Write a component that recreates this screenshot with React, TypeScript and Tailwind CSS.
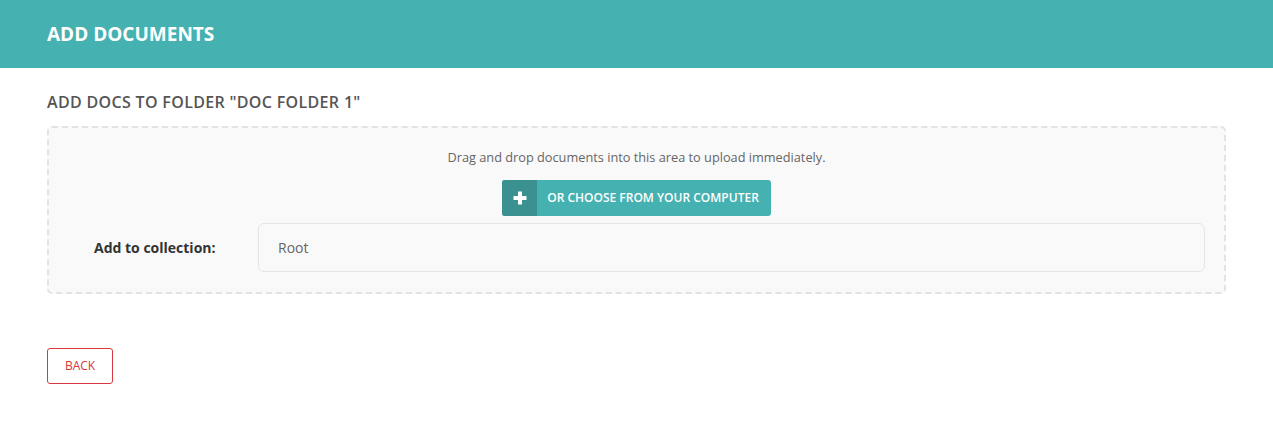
import React from "react";

export default function App() {
  return (
    <div className="min-h-[434px] w-full bg-white" style={{ fontFamily: '"Open Sans", sans-serif' }}>
      <div className="flex h-[68px] items-center bg-[#45b1b0] px-[47px]">
        <h1 className="text-[19px] font-bold text-white">ADD DOCUMENTS</h1>
      </div>
      <div className="px-[47px] pt-[22px]">
        <h2 className="text-[16px] font-semibold leading-[24px] tracking-[0.33px] text-[#555]">ADD DOCS TO FOLDER "DOC FOLDER 1"</h2>
        <div className="mt-[12px] flex h-[168px] flex-col rounded-[5px] border-2 border-dashed border-[#e3e3e3] bg-[#f9f9f9]">
          <p className="mt-[20px] text-center text-[12.75px] leading-[18px] text-[#666]">
            Drag and drop documents into this area to upload immediately.
          </p>
          <div className="mt-[14px] flex justify-center">
            <button className="flex h-[36px] items-stretch overflow-hidden rounded-[3px] bg-[#45b1b0] text-white">
              <span className="flex w-[35px] items-center justify-center bg-[#3a9190]">
                <svg width="14" height="14" viewBox="0 0 14 14">
                  <rect x="5" y="0.5" width="4" height="13" rx="0.5" fill="white" />
                  <rect x="0.5" y="5" width="13" height="4" rx="0.5" fill="white" />
                </svg>
              </span>
              <span className="flex items-center pl-[10px] pr-[12px] text-[12px] font-semibold">OR CHOOSE FROM YOUR COMPUTER</span>
            </button>
          </div>
          <div className="mt-[7px] flex items-center pr-[19px]">
            <label className="w-[209px] pl-[45px] text-[14px] font-bold text-[#333]">Add to collection:</label>
            <div className="flex h-[49px] flex-1 items-center rounded-[6px] border border-[#e5e5e5] bg-[#f9f9f9] px-[19px] text-[14px] text-[#666]">
              Root
            </div>
          </div>
        </div>
        <button className="mt-[54px] h-[36px] w-[66px] rounded-[3px] border border-[#d9363e] text-[12px] text-[#d9363e]">
          BACK
        </button>
      </div>
    </div>
  );
}
